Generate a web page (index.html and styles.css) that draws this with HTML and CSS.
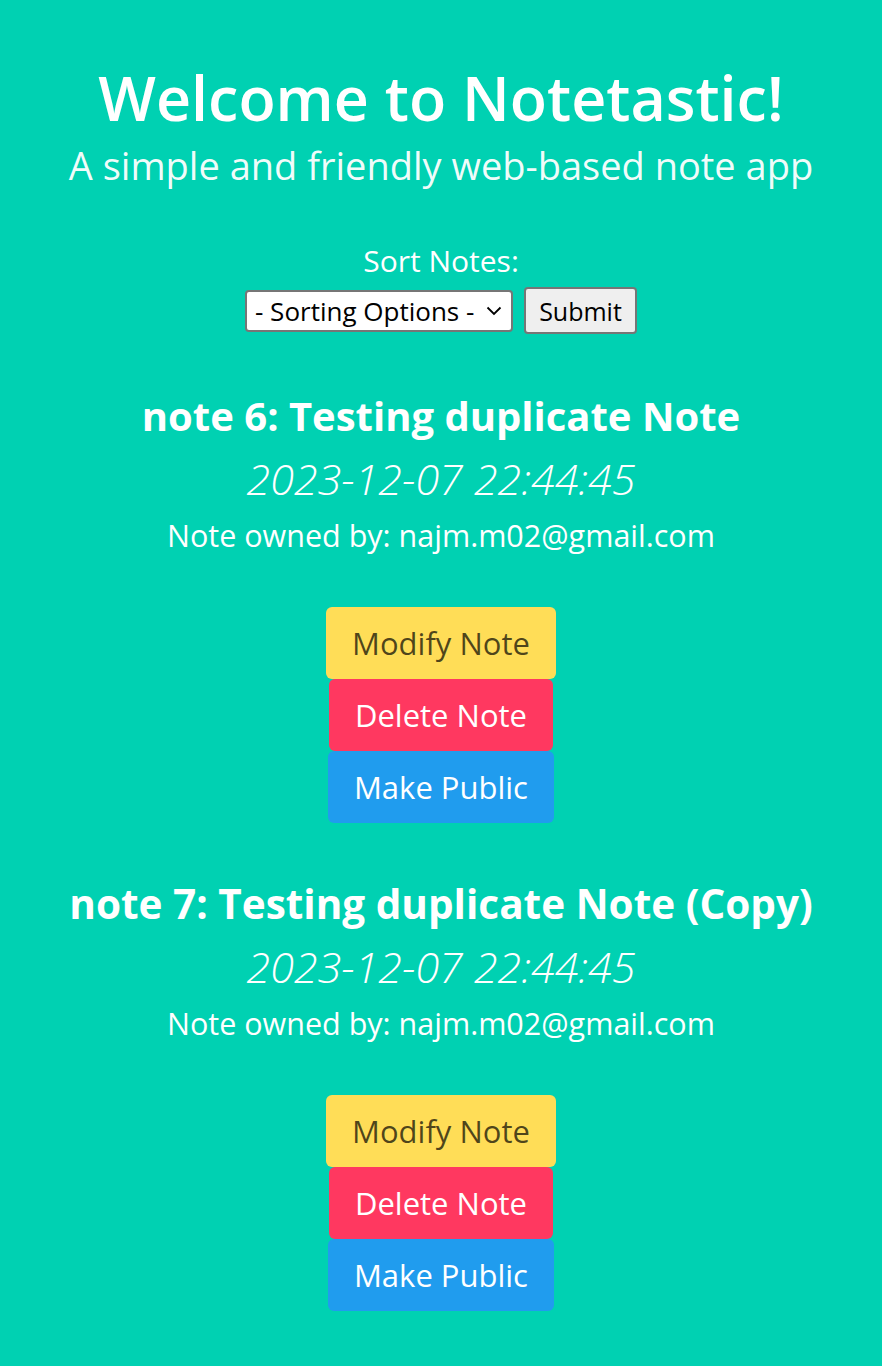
FILE: index.html
```html
<!DOCTYPE html>
<html lang="en">
<head>
<meta charset="utf-8">
<title>Notetastic</title>
<link rel="stylesheet" href="styles.css">
</head>
<body>
<main class="page">
  <header class="hero">
    <h1 class="title">Welcome to Notetastic!</h1>
    <p class="subtitle">A simple and friendly web-based note app</p>
  </header>

  <form class="sort-form">
    <label class="sort-label" for="sort">Sort Notes:</label>
    <div class="sort-row">
      <div class="select-wrap">
        <select id="sort" class="sort-select">
          <option>- Sorting Options -</option>
        </select>
        <svg class="chevron" viewBox="0 0 16 10" width="16" height="10" aria-hidden="true">
          <path d="M1.5 1.5 L8 8 L14.5 1.5" fill="none" stroke="#000" stroke-width="1.8"/>
        </svg>
      </div>
      <button type="button" class="submit-btn">Submit</button>
    </div>
  </form>

  <section class="note">
    <h2 class="note-title">note 6: Testing duplicate Note</h2>
    <p class="note-date">2023-12-07 22:44:45</p>
    <p class="note-owner">Note owned by: najm.m02@gmail.com</p>
    <div class="actions">
      <button type="button" class="btn btn-warning">Modify Note</button>
      <button type="button" class="btn btn-danger">Delete Note</button>
      <button type="button" class="btn btn-info">Make Public</button>
    </div>
  </section>

  <section class="note">
    <h2 class="note-title">note 7: Testing duplicate Note (Copy)</h2>
    <p class="note-date">2023-12-07 22:44:45</p>
    <p class="note-owner">Note owned by: najm.m02@gmail.com</p>
    <div class="actions">
      <button type="button" class="btn btn-warning">Modify Note</button>
      <button type="button" class="btn btn-danger">Delete Note</button>
      <button type="button" class="btn btn-info">Make Public</button>
    </div>
  </section>
</main>
</body>
</html>
```
FILE: styles.css
```css
html, body {
  margin: 0;
  padding: 0;
  background: #00d1b2;
}

body {
  font-family: "Open Sans", "Noto Sans", "DejaVu Sans", sans-serif;
  color: #ffffff;
}

.page {
  display: flex;
  flex-direction: column;
  align-items: center;
  text-align: center;
  padding-top: 62px;
  padding-bottom: 40px;
}

.hero {
  display: flex;
  flex-direction: column;
  align-items: center;
}

.title {
  margin: 0;
  font-size: 61px;
  line-height: 72px;
  font-weight: 600;
  white-space: nowrap;
}

.subtitle {
  margin: 7px 0 0;
  font-size: 38px;
  line-height: 48px;
  font-weight: 400;
  color: rgba(255, 255, 255, 0.95);
  white-space: nowrap;
}

.sort-form {
  margin-top: 54px;
  display: flex;
  flex-direction: column;
  align-items: center;
}

.sort-label {
  font-size: 30px;
  line-height: 36px;
}

.sort-row {
  margin-top: 8px;
  display: flex;
  align-items: center;
  gap: 11px;
}

.select-wrap {
  position: relative;
  display: flex;
}

.sort-select {
  appearance: none;
  -webkit-appearance: none;
  width: 268px;
  height: 42px;
  box-sizing: border-box;
  border: 2px solid #767676;
  border-radius: 4px;
  background: #ffffff;
  color: #000000;
  font-family: inherit;
  font-size: 26px;
  padding: 0 30px 0 8px;
  margin: 0;
}

.chevron {
  position: absolute;
  right: 11px;
  top: 16px;
  pointer-events: none;
}

.submit-btn {
  height: 47px;
  width: 113px;
  box-sizing: border-box;
  border: 2px solid #767676;
  border-radius: 4px;
  background: #efefef;
  color: #000000;
  font-family: inherit;
  font-size: 25px;
  padding: 0;
  margin: 0;
}

.note {
  margin-top: 57px;
  display: flex;
  flex-direction: column;
  align-items: center;
}

.note + .note {
  margin-top: 56px;
}

.note-title {
  margin: 0;
  font-size: 40px;
  line-height: 50px;
  font-weight: 700;
  white-space: nowrap;
}

.note + .note .note-title {
  font-size: 40.5px;
}

.note-date {
  margin: 10px 0 0;
  font-size: 43px;
  line-height: 56px;
  font-style: italic;
  font-weight: 350;
}

.note-owner {
  margin: 8px 0 0;
  font-size: 30.5px;
  line-height: 40px;
}

.actions {
  margin-top: 52px;
  display: flex;
  flex-direction: column;
  align-items: center;
}

.btn {
  height: 72px;
  box-sizing: border-box;
  border: none;
  border-radius: 6px;
  padding: 0 26px;
  margin: 0;
  font-family: inherit;
  font-size: 31px;
  color: #ffffff;
}

.btn-warning {
  background: #ffdd57;
  color: rgba(0, 0, 0, 0.7);
}

.btn-danger {
  background: #ff3860;
}

.btn-info {
  background: #209cee;
}
```
